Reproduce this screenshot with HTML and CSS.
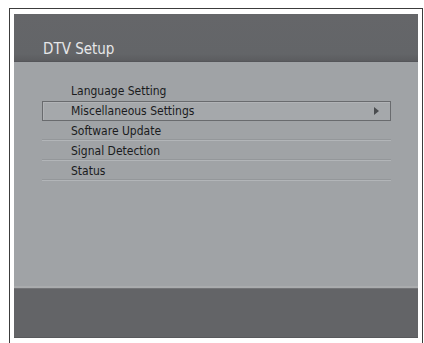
FILE: index.html
```html
<!DOCTYPE html>
<html lang="en">
<head>
    <meta charset="UTF-8">
    <meta name="viewport" content="width=device-width, initial-scale=1.0">
    <title>DTV Setup</title>
    <link rel="stylesheet" href="styles.css">
</head>
<body>
    <div class="frame">
        <div class="panel">
            <div class="panel-header">
                <h1>DTV Setup</h1>
            </div>

            <div class="panel-body">
                <ul class="menu">
                    <li class="menu-item first">Language Setting</li>
                    <li class="menu-item selected">
                        Miscellaneous Settings
                        <span class="arrow"></span>
                    </li>
                    <li class="menu-item">Software Update</li>
                    <li class="menu-item">Signal Detection</li>
                    <li class="menu-item">Status</li>
                </ul>
            </div>

            <div class="panel-footer"></div>
        </div>
    </div>
</body>
</html>
```

FILE: styles.css
```css
body {
    margin: 0;
    background: #ffffff;
    font-family: 'DejaVu Sans Condensed', 'DejaVu Sans', Verdana, sans-serif;
}
.frame {
    box-sizing: border-box;
    margin: 8px 0 0 9px;
    width: 414px;
    height: 335px;
    border-top: 1px solid #3c3c3c;
    border-left: 1px solid #3c3c3c;
    border-right: 1px solid #3c3c3c;
    padding: 5px 4px 0 4px;
}
.panel {
    height: 324px;
    display: flex;
    flex-direction: column;
    background: #a0a3a6;
}
.panel-header {
    height: 47px;
    background: linear-gradient(#656669, #636568 85%, #5b5c5f);
    border-bottom: 1px solid #55565a;
    padding-left: 29px;
    display: flex;
    align-items: flex-end;
}
.panel-header h1 {
    margin: 0 0 3px 0;
    font-size: 15px;
    font-weight: normal;
    color: #e6e7e8;
}
.panel-body {
    flex: 1;
    padding: 19px 0 0 28px;
    border-bottom: 2px solid #aaacae;
}
.menu {
    list-style: none;
    margin: 0;
    padding: 0;
    width: 349px;
}
.menu-item {
    box-sizing: border-box;
    height: 20px;
    line-height: 20px;
    padding-left: 29px;
    font-size: 12px;
    color: #1a1b1d;
    border-bottom: 1px solid #b2b5b8;
    box-shadow: inset 0 -1px 0 #94979a;
    position: relative;
}
.menu-item.first {
    border-bottom-color: transparent;
    box-shadow: none;
}
.menu-item.selected {
    border: 1px solid #696b6e;
    box-shadow: inset 1px 1px 0 #b1b3b6;
    background: #a5a8ab;
    padding-left: 28px;
    line-height: 18px;
}
.arrow {
    position: absolute;
    right: 11px;
    top: 5px;
    width: 0;
    height: 0;
    border-top: 4px solid transparent;
    border-bottom: 4px solid transparent;
    border-left: 5px solid #4a4c4f;
}
.panel-footer {
    height: 48px;
    background: #636467;
    border-top: 1px solid #737477;
    border-bottom: 1px solid #58595c;
}
```
